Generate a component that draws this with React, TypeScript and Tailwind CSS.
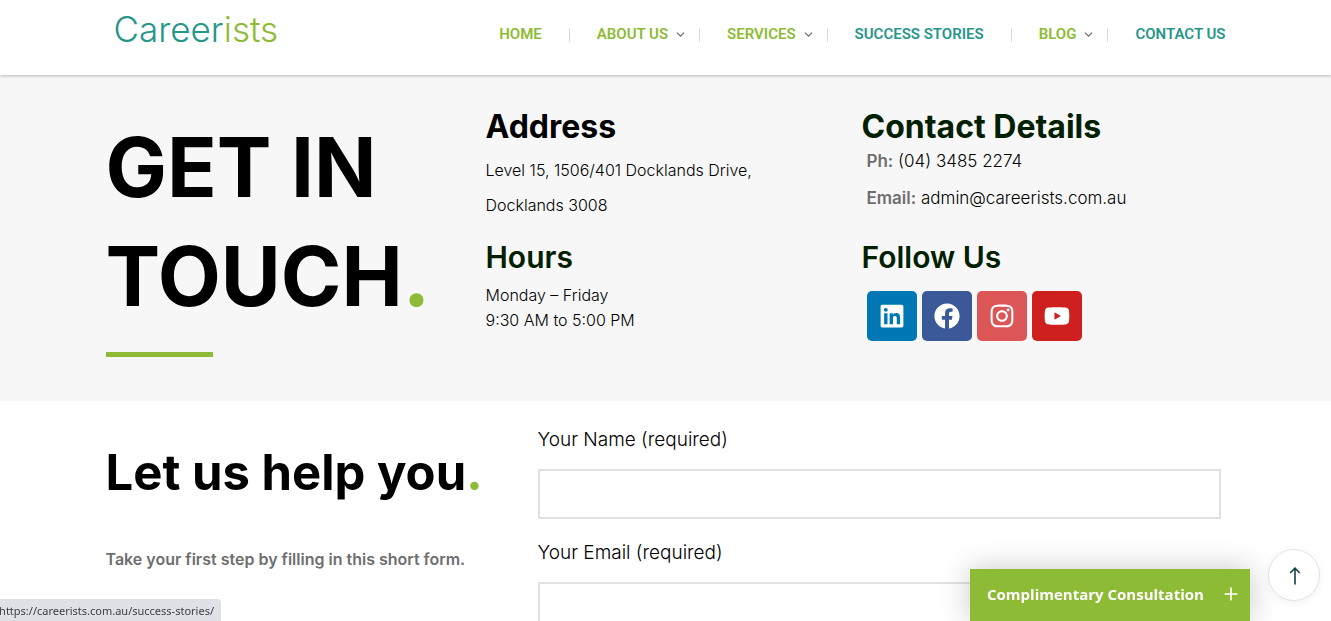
import React from 'react';
import { ChevronDown, Plus } from 'lucide-react';
import { FaLinkedin, FaFacebook, FaInstagram, FaYoutube } from 'react-icons/fa';

const navItems = [
  { label: 'HOME', color: 'text-[#8dbb35]', menu: false, box: 'pr-[27px]' },
  { label: 'ABOUT US', color: 'text-[#8dbb35]', menu: true, box: 'pl-[27px] pr-3' },
  { label: 'SERVICES', color: 'text-[#8dbb35]', menu: true, box: 'pl-[27px] pr-3' },
  { label: 'SUCCESS STORIES', color: 'text-[#26968a]', menu: false, box: 'px-[27px]' },
  { label: 'BLOG', color: 'text-[#8dbb35]', menu: true, box: 'pl-[27px] pr-3' },
  { label: 'CONTACT US', color: 'text-[#26968a]', menu: false, box: 'pl-[27px]' },
];

const socials = [
  { label: 'LinkedIn', icon: FaLinkedin, bg: 'bg-[#0077b5]' },
  { label: 'Facebook', icon: FaFacebook, bg: 'bg-[#3b5998]' },
  { label: 'Instagram', icon: FaInstagram, bg: 'bg-[#dc5658]' },
  { label: 'YouTube', icon: FaYoutube, bg: 'bg-[#cd201f]' },
];

const fields = [
  { id: 'your-name', label: 'Your Name (required)', type: 'text' },
  { id: 'your-email', label: 'Your Email (required)', type: 'email' },
];

const Header: React.FC = () => (
  <header className="relative bg-white shadow-[0_1px_3px_rgba(0,0,0,0.25)]">
    <div className="mx-auto flex h-[75px] max-w-[1140px] items-start justify-between pl-[18px] pr-[10px]">
      <a href="#home" className="pt-[7px] text-[35px] leading-[44px] font-light text-[#26968a]">
        Career<span className="text-[#8dbb35]">ists</span>
      </a>
      <nav className="flex items-center pt-6 font-['Roboto',sans-serif] text-[15px] leading-5 font-semibold">
        {navItems.map((item, i) => (
          <React.Fragment key={item.label}>
            {i > 0 && <span className="mt-[2px] h-[14px] w-px bg-[#d9d9d9]" />}
            <a href="#nav" className={`flex items-center gap-[6px] ${item.color} ${item.box}`}>
              {item.label}
              {item.menu && <ChevronDown className="h-[13px] w-[13px] text-[#666666]" />}
            </a>
          </React.Fragment>
        ))}
      </nav>
    </div>
  </header>
);

const ContactBand: React.FC = () => (
  <section className="bg-[#f7f7f7]">
    <div className="mx-auto grid min-h-[326px] max-w-[1140px] grid-cols-[380fr_376fr_384fr] text-black">
      <div className="pt-[38px] pl-[10px]">
        <h1 className="text-[82px] leading-[109px] font-bold">
          GET IN<br />
          TOUCH<span className="text-[#8dbb35]">.</span>
        </h1>
        <div className="mt-[21px] h-[5px] w-[107px] bg-[#8dbb35]" />
      </div>

      <div className="pt-8 pl-[10px]">
        <h2 className="text-[32px] leading-10 font-bold">Address</h2>
        <p className="mt-[6px] text-[16px] leading-[35px] font-light">
          Level 15, 1506/401 Docklands Drive,<br />
          Docklands 3008
        </p>
        <h2 className="mt-[14px] text-[30px] leading-10 font-semibold text-[#002000]">Hours</h2>
        <p className="mt-[6px] text-[16px] leading-[25px] font-light">
          Monday – Friday<br />
          9:30 AM to 5:00 PM
        </p>
      </div>

      <div className="pt-8 pl-[10px]">
        <h2 className="text-[32px] leading-10 font-bold text-[#002000]">Contact Details</h2>
        <div className="-mt-1 pl-[5px] text-[17px] leading-[37px] font-light">
          <p>
            <strong className="font-semibold text-[#6e6e6e]">Ph:</strong> (04) 3485 2274
          </p>
          <p>
            <strong className="font-semibold text-[#6e6e6e]">Email:</strong> admin@careerists.com.au
          </p>
        </div>
        <h2 className="mt-5 text-[30px] leading-10 font-semibold text-[#002000]">Follow Us</h2>
        <div className="mt-[14px] flex gap-[5px] pl-[5px]">
          {socials.map(({ label, icon: Icon, bg }) => (
            <a key={label} href="#social" aria-label={label} className={`flex h-[50px] w-[50px] items-center justify-center rounded-[5px] text-white ${bg}`}>
              <Icon className="h-[26px] w-auto" />
            </a>
          ))}
        </div>
      </div>
    </div>
  </section>
);

const ContactForm: React.FC = () => (
  <section className="mx-auto grid max-w-[1140px] grid-cols-[442fr_698fr]">
    <div className="pt-10 pl-[10px]">
      <h2 className="text-[49px] leading-[64px] font-bold whitespace-nowrap text-black">
        Let us help you<span className="text-[#8dbb35]">.</span>
      </h2>
      <p className="mt-[42px] text-[16px] leading-6 font-semibold text-[#6e6e6e]">
        Take your first step by filling in this short form.
      </p>
    </div>
    <form className="pt-[25px] pr-[15px]">
      {fields.map((field) => (
        <div key={field.id} className="mb-5">
          <label htmlFor={field.id} className="block text-[19px] leading-7 font-light text-black">
            {field.label}
          </label>
          <input id={field.id} type={field.type} className="mt-[15px] block h-[50px] w-full border-2 border-[#e1e1e1] bg-white px-4 text-[16px] outline-none" />
        </div>
      ))}
    </form>
  </section>
);

const App: React.FC = () => {
  return (
    <div className="h-screen overflow-hidden bg-white font-['Inter',sans-serif]">
      <Header />
      <ContactBand />
      <ContactForm />

      <button type="button" className="fixed right-[81px] bottom-0 flex h-[52px] w-[280px] items-center justify-between bg-[#8dbb35] pr-[9px] pb-[2px] pl-[17px] font-['Open_Sans',sans-serif] text-[15px] font-bold text-white shadow-[0_0_30px_rgba(0,0,0,0.22)]">
        Complimentary Consultation
        <Plus className="h-5 w-5" />
      </button>

      <button type="button" aria-label="Back to top" className="fixed right-[11px] bottom-5 flex h-[52px] w-[52px] items-center justify-center rounded-full border border-[#e3e3e3] bg-white pt-[2px] pl-px text-[#17404a] shadow-[0_2px_8px_rgba(0,0,0,0.06)]">
        <svg className="h-[18px] w-3" viewBox="0 0 12 18" fill="none" stroke="currentColor" strokeWidth="1.6">
          <path d="M6 17.5V1.5M1.2 6 6 1.2 10.8 6" />
        </svg>
      </button>

      <div className="fixed bottom-0 left-0 flex h-[22px] w-[221px] justify-end rounded-tr-[4px] bg-[#dee1e6] pr-[7px] font-['Noto_Sans',sans-serif] text-[11px] leading-[23px] whitespace-nowrap text-[#3c4043]">
        https://careerists.com.au/success-stories/
      </div>
    </div>
  );
};

export default App;
